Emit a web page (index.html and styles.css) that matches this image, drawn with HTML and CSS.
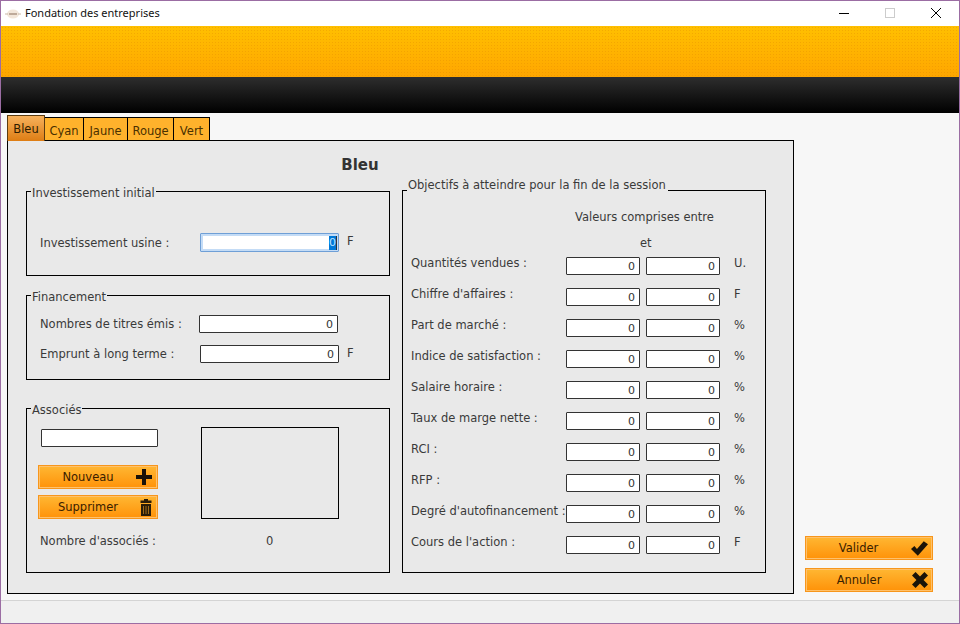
FILE: index.html
```html
<!DOCTYPE html>
<html lang="fr">
<head>
    <meta charset="UTF-8">
    <title>Fondation des entreprises</title>
    <link rel="stylesheet" href="styles.css">
</head>
<body>
<div class="window">
    <div class="titlebar">
        <svg class="app-icon" width="16" height="12" viewBox="0 0 16 12"><ellipse cx="8" cy="6" rx="6" ry="4.5" fill="#f2e6da"/><path d="M0 6h3M13 6h3" stroke="#c9b8a6"/><path d="M4 6h8" stroke="#8a6f5a"/></svg>
        <span class="app-title">Fondation des entreprises</span>
        <div class="win-controls">
            <span class="win-btn"><svg width="10" height="10" viewBox="0 0 10 10"><path d="M0 5.500h10" stroke="#000"/></svg></span>
            <span class="win-btn"><svg width="10" height="10" viewBox="0 0 10 10"><rect x="0.5" y="0.5" width="9" height="9" fill="none" stroke="#ccc"/></svg></span>
            <span class="win-btn"><svg width="10" height="10" viewBox="0 0 10 10"><path d="M0 0l10 10M10 0L0 10" stroke="#000"/></svg></span>
        </div>
    </div>
    <div class="banner-yellow"></div>
    <div class="banner-dark"></div>

    <div class="content">
        <div class="left-area">
            <div class="tabs">
                <span class="tab active tab-bleu">Bleu</span>
                <span class="tab tab-cyan">Cyan</span>
                <span class="tab tab-jaune">Jaune</span>
                <span class="tab tab-rouge">Rouge</span>
                <span class="tab tab-vert">Vert</span>
            </div>
            <div class="panel">
                <h1 class="panel-title">Bleu</h1>
                <div class="columns">
                    <div class="col-left">
                        <fieldset class="group group-invest">
                            <legend>Investissement initial</legend>
                            <div class="invest-row">
                                <label class="lbl-invest">Investissement usine :</label>
                                <div class="fake-input"><span class="selected">0</span><span class="caret"></span></div>
                                <span class="unit-f">F</span>
                            </div>
                        </fieldset>
                        <fieldset class="group group-fin">
                            <legend>Financement</legend>
                            <div class="fin-row">
                                <label class="lbl-fin">Nombres de titres émis :</label>
                                <input class="num num-titres" value="0">
                            </div>
                            <div class="fin-row fin-row2">
                                <label class="lbl-fin2">Emprunt à long terme :</label>
                                <input class="num num-titres" value="0">
                                <span class="unit-f">F</span>
                            </div>
                        </fieldset>
                        <fieldset class="group group-assoc">
                            <legend>Associés</legend>
                            <div class="assoc-top">
                                <div class="assoc-form">
                                    <input class="assoc-name">
                                    <button class="btn btn-small">
                                        <span class="btn-text">Nouveau</span>
                                        <svg class="btn-icon" width="16" height="16" viewBox="0 0 16 16"><path d="M6 0h4v6h6v4h-6v6H6v-6H0V6h6z" fill="#1a1208"/></svg>
                                    </button>
                                    <button class="btn btn-small">
                                        <span class="btn-text">Supprimer</span>
                                        <svg class="btn-icon btn-icon-trash" width="12" height="17" viewBox="0 0 12 17"><path d="M4 0h4v1.500h3.500V4H.5V1.500H4zM1 5h10v12H1z" fill="#2a1c08"/><path d="M3.500 7v8M6 7v8M8.500 7v8" stroke="#a06a18"/></svg>
                                    </button>
                                </div>
                                <div class="assoc-list"></div>
                            </div>
                            <div class="assoc-count">
                                <span class="count-label">Nombre d'associés :</span>
                                <span>0</span>
                            </div>
                        </fieldset>
                    </div>
                    <fieldset class="group group-obj">
                        <legend>Objectifs à atteindre pour la fin de la session</legend>
                        <div class="obj-head">Valeurs comprises entre</div>
                        <div class="obj-et">et</div>
                        <div class="obj-row"><label>Quantités vendues :</label><input class="num" value="0"><input class="num" value="0"><span class="unit">U.</span></div>
                        <div class="obj-row"><label>Chiffre d'affaires :</label><input class="num" value="0"><input class="num" value="0"><span class="unit">F</span></div>
                        <div class="obj-row"><label>Part de marché :</label><input class="num" value="0"><input class="num" value="0"><span class="unit">%</span></div>
                        <div class="obj-row"><label>Indice de satisfaction :</label><input class="num" value="0"><input class="num" value="0"><span class="unit">%</span></div>
                        <div class="obj-row"><label>Salaire horaire :</label><input class="num" value="0"><input class="num" value="0"><span class="unit">%</span></div>
                        <div class="obj-row"><label>Taux de marge nette :</label><input class="num" value="0"><input class="num" value="0"><span class="unit">%</span></div>
                        <div class="obj-row"><label>RCI :</label><input class="num" value="0"><input class="num" value="0"><span class="unit">%</span></div>
                        <div class="obj-row"><label>RFP :</label><input class="num" value="0"><input class="num" value="0"><span class="unit">%</span></div>
                        <div class="obj-row"><label>Degré d'autofinancement :</label><input class="num" value="0"><input class="num" value="0"><span class="unit">%</span></div>
                        <div class="obj-row"><label>Cours de l'action :</label><input class="num" value="0"><input class="num" value="0"><span class="unit">F</span></div>
                    </fieldset>
                </div>
            </div>
        </div>
        <div class="actions">
            <button class="btn btn-large">
                <span class="btn-text">Valider</span>
                <svg class="btn-icon" width="17" height="15" viewBox="0 0 20 17"><path d="M0 9l4-3.500 3 3.500L15 0l5 3.500L8 17z" fill="#1c1408"/></svg>
            </button>
            <button class="btn btn-large">
                <span class="btn-text">Annuler</span>
                <svg class="btn-icon" width="16" height="16" viewBox="0 0 18 18"><path d="M4 0l5 5 5-5 4 4-5 5 5 5-4 4-5-5-5 5-4-4 5-5-5-5z" fill="#1c1408"/></svg>
            </button>
        </div>
    </div>
    <div class="statusbar"></div>
</div>
</body>
</html>
```

FILE: styles.css
```css
* {
    box-sizing: border-box;
}
html, body {
    margin: 0;
    padding: 0;
}
body {
    width: 960px;
    height: 624px;
    overflow: hidden;
    font-family: "DejaVu Sans", sans-serif;
    font-size: 11.5px;
    line-height: 14px;
    color: #3a3a3a;
}
.window {
    width: 960px;
    height: 624px;
    display: flex;
    flex-direction: column;
    border: 1px solid #9b6da3;
    background: #f7f7f7;
}

/* title bar */
.titlebar {
    height: 25px;
    flex: none;
    display: flex;
    align-items: center;
    background: #fff;
    padding-left: 4px;
}
.app-title {
    margin-left: 4px;
    padding-bottom: 2px;
    font-family: "Noto Sans", sans-serif;
    font-size: 11px;
    color: #111;
}
.win-controls {
    margin-left: auto;
    display: flex;
}
.win-btn {
    width: 46px;
    height: 25px;
    padding-bottom: 1px;
    display: flex;
    align-items: center;
    justify-content: center;
}

/* banner */
.banner-yellow {
    height: 51px;
    flex: none;
    background-image:
        radial-gradient(circle, rgba(225, 135, 0, 0.35) 0.7px, transparent 0.8px),
        linear-gradient(#ffc000, #ffa600);
    background-size: 3px 3px, 100% 100%;
}
.banner-dark {
    height: 36px;
    flex: none;
    background: linear-gradient(#2e2e2e, #000);
}

/* main area */
.content {
    flex: 1;
    display: flex;
    min-height: 0;
}
.left-area {
    padding: 2px 0 0 6px;
    width: 793px;
    flex: none;
}
.tabs {
    display: flex;
    align-items: flex-end;
    height: 26px;
    position: relative;
    z-index: 1;
    margin-bottom: -1px;
}
.tab {
    height: 24px;
    line-height: 26px;
    text-align: center;
    color: #4a3000;
    background: #ffb22c;
    border: 1px solid #000;
    border-left: none;
}
.tab-bleu {
    width: 38px;
}
.tab-cyan {
    width: 39px;
}
.tab-jaune {
    width: 44px;
}
.tab-rouge {
    width: 46px;
}
.tab-vert {
    width: 36px;
}
.tab.active {
    height: 26px;
    line-height: 27px;
    border-left: 1px solid #5b3b10;
    border-color: #5b3b10;
    border-bottom: none;
    background: linear-gradient(#f6b15c, #de7d14);
    color: #2e1c00;
}
.panel {
    width: 787px;
    height: 454px;
    border: 1px solid #000;
    background: #e9e9e9;
    padding: 0 27px 0 18px;
}
.panel-title {
    margin: 0;
    padding: 15px 72px 0 0;
    height: 43px;
    text-align: center;
    font-size: 15px;
    line-height: 18px;
    font-weight: bold;
    color: #333;
}
.columns {
    display: flex;
    gap: 12px;
    align-items: flex-start;
}
.col-left {
    width: 364px;
    flex: none;
    display: flex;
    flex-direction: column;
}

/* groups */
.group {
    margin: 0;
    padding: 0;
    min-width: 0;
    border: 1px solid #000;
}
.group legend {
    margin-left: 4px;
    padding: 0 1px;
    height: 14px;
    line-height: 18px;
}
.group-invest {
    height: 92px;
}
.invest-row {
    display: flex;
    align-items: center;
    padding: 35px 0 0 13px;
}
.lbl-invest {
    width: 160px;
    flex: none;
}
.fake-input {
    width: 139px;
    height: 19px;
    display: flex;
    justify-content: flex-end;
    align-items: center;
    padding-right: 1px;
    background: #fff;
    border: 1px solid #6f9fd6;
    border-radius: 1px;
    box-shadow: inset 0 0 0 2px #c4dcf6;
}
.selected {
    background: #0078d7;
    color: #bfe3ff;
    height: 14px;
    width: 7px;
    line-height: 14px;
    font-size: 11px;
}
.caret {
    width: 1px;
    height: 14px;
    background: #333;
}
.unit-f {
    margin-left: 8px;
    margin-top: -3px;
}
.group-fin {
    height: 92px;
    margin-top: 12px;
}
.fin-row {
    display: flex;
    align-items: center;
    padding: 13px 0 0 13px;
}
.fin-row2 {
    padding-top: 12px;
}
.lbl-fin {
    width: 159px;
    flex: none;
}
.lbl-fin2 {
    width: 160px;
    flex: none;
}
.num {
    width: 74px;
    height: 18px;
    padding: 0 4px;
    flex: none;
    text-align: right;
    font-family: "DejaVu Sans", sans-serif;
    font-size: 11px;
    color: #333;
    background: #fff;
    border: 1px solid #333;
    border-radius: 1px;
    outline: none;
}
.num-titres {
    width: 139px;
}
.group-assoc {
    height: 172px;
    margin-top: 21px;
}
.assoc-top {
    display: flex;
    padding: 12px 0 0 11px;
}
.assoc-form {
    width: 163px;
    flex: none;
    display: flex;
    flex-direction: column;
    gap: 6px;
}
.assoc-name {
    width: 117px;
    height: 18px;
    margin: 2px 0 12px 3px;
    background: #fff;
    border: 1px solid #333;
    border-radius: 1px;
    outline: none;
}
.assoc-list {
    width: 138px;
    height: 92px;
    border: 1px solid #000;
}
.assoc-count {
    display: flex;
    padding: 15px 0 0 13px;
}
.count-label {
    width: 226px;
    flex: none;
}

/* buttons */
.btn {
    display: flex;
    align-items: center;
    padding: 0;
    border: 1px solid #f7961c;
    box-shadow: inset 0 0 0 1px #ffc16b;
    background: linear-gradient(#ffb733, #ff9208);
    font-family: "DejaVu Sans", sans-serif;
    font-size: 11.5px;
    color: #3a2000;
}
.btn-text {
    flex: 1;
    text-align: center;
}
.btn-small {
    width: 120px;
    height: 24px;
}
.btn-small .btn-text {
    padding-left: 1px;
}
.btn-small .btn-icon {
    margin-right: 5px;
}
.btn-small .btn-icon-trash {
    margin-right: 5px;
    margin-left: 4px;
}
.actions {
    flex: 1;
    display: flex;
    flex-direction: column;
    justify-content: flex-end;
    gap: 8px;
    padding: 0 0 8px 11px;
}
.btn-large {
    width: 128px;
    height: 24px;
}
.btn-large .btn-icon {
    margin-right: 4px;
}

/* objectives */
.group-obj {
    width: 364px;
    height: 390px;
    flex: none;
    margin-top: -1px;
}
.group-obj legend {
    line-height: 4px;
    padding: 0 2px 0 1px;
}
.obj-head {
    padding: 13px 0 0 172px;
}
.obj-et {
    padding: 12px 0 0 237px;
    height: 33px;
    margin-bottom: -1px;
}
.obj-row {
    display: flex;
    align-items: flex-start;
    height: 31px;
    padding-left: 8px;
}
.obj-row label {
    width: 155px;
    flex: none;
}
.obj-row .num {
    margin-top: 1px;
}
.obj-row .num + .num {
    margin-left: 6px;
}
.unit {
    margin-left: 14px;
}

.statusbar {
    height: 23px;
    flex: none;
    background: #f0f0f0;
    border-top: 1px solid #d4d4d4;
}
```
